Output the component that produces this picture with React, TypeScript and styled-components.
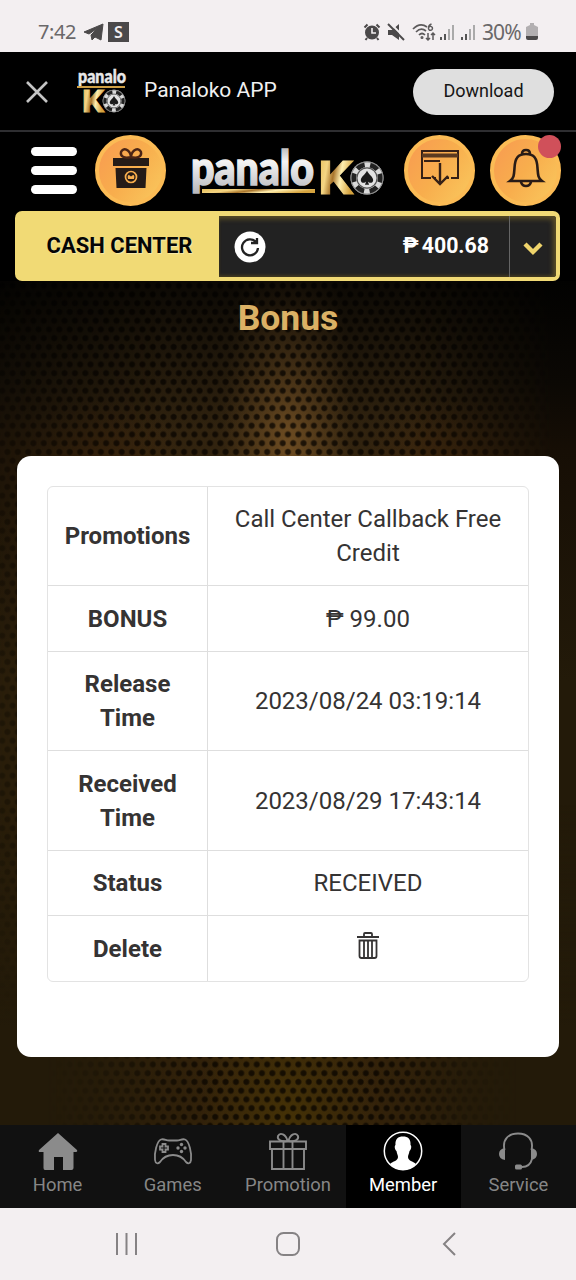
import React from 'react';
import styled, { createGlobalStyle } from 'styled-components';

const Global = createGlobalStyle`
  * { box-sizing: border-box; }
  body { margin: 0; background: #000; font-family: Roboto, "Liberation Sans", sans-serif; }
  svg { display: block; flex: none; overflow: visible; }
`;

const Screen = styled.div`
  width: 576px; height: 1280px; display: flex; flex-direction: column; overflow: hidden; background: #000;
`;

const StatusBar = styled.div`
  height: 52px; flex: none; background: #f3eff1; color: #5c5a5b;
  display: flex; align-items: center; padding: 12px 38px 0 38px;
`;
const Clock = styled.span`
  font: 400 20px/24px "Noto Sans", sans-serif; width: 40px; margin-right: 6px;
  letter-spacing: -0.4px; color: #6a6869; white-space: nowrap;
`;
const SBadge = styled.span`
  width: 21px; height: 20px; margin-left: 5px; background: #4b494a; color: #f3eff1;
  font: 600 16px/20px "Noto Sans", sans-serif; text-align: center;
`;
const StatusRight = styled.div`margin-left: auto; display: flex; align-items: center;`;
const Battery = styled.span`
  font: 400 21px/24px "Noto Sans", sans-serif; letter-spacing: -0.9px; width: 41px; margin: 0 3px 0 1px;
  color: #6a6869; white-space: nowrap;
`;

const AppBar = styled.div`
  height: 80px; flex: none; border-bottom: 2px solid #2e2e31; display: flex; align-items: center;
  padding: 1px 22px 0 25px; color: #f1f1f1;
`;
const AppLogo = styled.div`margin-left: 27px;`;
const AppName = styled.span`
  font-size: 21px; line-height: 24px; margin: -3px 0 0 15px;
`;
const Download = styled.button`
  margin-left: auto; width: 141px; height: 46px; border: 0; border-radius: 23px; background: #dfdfdf;
  color: #161616; font: 400 18px/44px Roboto, sans-serif; padding: 0 0 2px;
`;

const Header = styled.header`
  height: 79px; flex: none; display: flex; padding: 3px 15px 0 31px;
`;
const Burger = styled.div`
  width: 46px; height: 47px; margin-top: 12px; display: flex; flex-direction: column; justify-content: space-between;
`;
const Bar = styled.span`height: 9px; border-radius: 5px; background: #fff;`;
const Round = styled.div<{ $gap: number }>`
  position: relative; width: 71px; height: 71px; margin-left: ${p => p.$gap}px; padding-bottom: 6px; border-radius: 50%;
  background: linear-gradient(125deg, #f89f50 12%, #f8ae4d 50%, #f9c25a 88%);
  border: 4px solid #fbbb55; display: flex; align-items: center; justify-content: center; flex: none;
`;
const Alert = styled.i`
  position: absolute; top: -4px; right: -4px; width: 23px; height: 23px; border-radius: 50%; background: #d0505a;
`;
const LogoBox = styled.div`margin: 8px 0 0 24px; width: 196px;`;

const Cash = styled.div`
  height: 70px; flex: none; margin: 0 16px 0 15px; border-radius: 7px; background: #f1da75; display: flex; padding: 5px 4px 4px 0;
`;
const CashLabel = styled.div`
  width: 204px; padding-left: 5px; text-align: center; font-weight: 700; font-size: 22px; line-height: 60px; color: #050505;
  text-shadow: 1px 1px 1px #fff6; white-space: nowrap;
`;
const CashPanel = styled.div`
  flex: 1; display: flex; align-items: center; background: #222; color: #fff; padding-left: 15px;
  border-radius: 0 3px 3px 0; box-shadow: inset -3px 3px 5px #5c4f27, inset 0 -2px 3px #40391f;
`;
const Amount = styled.span`
  margin: 0 20px 2px auto; font-weight: 700; font-size: 21.3px; display: flex; gap: 3px;
`;
const More = styled.div`
  width: 47px; height: 61px; border-left: 1px solid #656565; display: flex; align-items: center; justify-content: center; padding-top: 3px;
`;

const Page = styled.main`
  position: relative; flex: 1; padding: 18px 17px 0; display: flex; flex-direction: column; align-items: center;
  background:
    linear-gradient(#000b 0, #0006 60px, transparent 150px),
    radial-gradient(circle, #080400c0 0 2.3px, transparent 3.7px) 2.2px 4.7px / 10.4px 17.5px,
    radial-gradient(circle, #080400c0 0 2.3px, transparent 3.7px) 7.4px 13.45px / 10.4px 17.5px,
    radial-gradient(ellipse 65px 260px at 50% 170px, #6d4c22, #6d4c2200),
    radial-gradient(ellipse 90px 160px at 50% 840px, #443106, #44310600),
    radial-gradient(ellipse 90px 70px at 17% 185px, #4a2a0c88, #4a2a0c00),
    radial-gradient(ellipse 90px 70px at 78% 185px, #4a2a0c88, #4a2a0c00),
    linear-gradient(#2b200f, #3a270e 400px, #33220a);
  &::before, &::after { content: ""; position: absolute; left: 0; right: 0; bottom: 0; }
  &::before {
    top: 0;
    background: linear-gradient(#020201, #0b0804 100px, #160e05 170px, #231a09 400px);
    mask-image: linear-gradient(90deg, #000b 0, transparent 27%, transparent 72%, #000 96%);
  }
  &::after {
    height: 320px; background: linear-gradient(#231a0900, #231a09 220px);
    mask-image: linear-gradient(90deg, #000 8%, transparent 38%, transparent 65%, #000 90%);
  }
`;
const Title = styled.h1`
  position: relative; z-index: 1; margin: 0; font-size: 35.5px; line-height: 38px; font-weight: 700; color: #dbb165;
`;
const Card = styled.section`
  position: relative; z-index: 1; width: 542px; height: 601px; margin-top: 119px; border-radius: 14px; background: #fff;
  padding: 30px;
`;
const Table = styled.div`border: 1px solid #e3e3e3; border-radius: 6px; height: 496px; width: 482px; overflow: hidden;`;
const Row = styled.div<{ $h: number }>`
  display: grid; grid-template-columns: 160px 1fr; height: ${p => p.$h}px;
  & + & { border-top: 1px solid #dedede; }
`;
const Cell = styled.div<{ $head?: boolean }>`
  display: flex; align-items: center; justify-content: center; text-align: center; padding: 0 10px;
  font-size: 24px; line-height: 34px; color: #353333; font-weight: ${p => (p.$head ? 700 : 400)};
  border-right: ${p => (p.$head ? '1px solid #dedede' : '0')};
`;
const Trash = styled.svg`margin-bottom: 7px;`;

const Tabs = styled.nav`height: 83px; flex: none; display: grid; grid-template-columns: repeat(5, 1fr); background: #111;`;
const Tab = styled.div<{ $on?: boolean }>`
  display: flex; flex-direction: column; align-items: center; padding-top: 5px; font-size: 18.4px; line-height: 24px;
  color: ${p => (p.$on ? '#fff' : '#868686')}; background: ${p => (p.$on ? '#000' : '#111')};
  svg { margin-bottom: 2px; }
`;
const SystemNav = styled.div`
  height: 72px; flex: none; background: #f3eff1; display: flex; align-items: center; padding: 0 118px 0 114px; justify-content: space-between;
`;
const HomeKey = styled.svg`margin-right: 5px;`;

const Chip = ({ x, y, r }: { x: number; y: number; r: number }) => (
  <g transform={`translate(${x} ${y}) scale(${r / 16})`}>
    <circle r="16" fill="#d9d9d9" />
    <circle r="13.2" fill="none" stroke="#222" strokeWidth="5.2" strokeDasharray="8.4 5.42" transform="rotate(-18)" />
    <circle r="15.5" fill="none" stroke="#8d8d8d" strokeWidth="1" />
    <circle r="9.8" fill="#e2e2e2" stroke="#555" strokeWidth="1.2" />
    <path d="M0-7C2-3 6-1 6 2.2C6 5 2.4 5.5.8 3.4L2 6.5H-2L-.8 3.4C-2.4 5.5-6 5-6 2.2C-6-1-2-3 0-7Z" fill="#1b1b1b" />
  </g>
);

const Gradients = () => (
  <defs>
    <linearGradient id="silver" x1="0" y1="0" x2="0" y2="1">
      <stop offset="0" stopColor="#999" /><stop offset=".4" stopColor="#f4f4f4" /><stop offset=".7" stopColor="#d4d4d6" /><stop offset="1" stopColor="#b5b5b9" />
    </linearGradient>
    <linearGradient id="gold" x1="0" y1="0" x2="1" y2=".25">
      <stop offset="0" stopColor="#e6bd58" /><stop offset=".3" stopColor="#f4d583" /><stop offset=".5" stopColor="#a8742b" />
      <stop offset=".7" stopColor="#ffefb0" /><stop offset="1" stopColor="#d5a33f" />
    </linearGradient>
  </defs>
);

const WideLogo = () => (
  <svg width="196" height="56" viewBox="0 0 196 56">
    <Gradients />
    <text x="1" y="42" textLength="123" lengthAdjust="spacingAndGlyphs" fontFamily="Lato" fontWeight="900" fontSize="47" fill="url(#silver)" stroke="url(#silver)" strokeWidth="1.6">panalo</text>
    <path d="M12 46H125V50H12Z" fill="url(#gold)" />
    <text x="128" y="51" textLength="35" lengthAdjust="spacingAndGlyphs" fontFamily="Roboto" fontWeight="700" fontSize="47" fill="url(#gold)" stroke="url(#gold)">K</text>
    <Chip x={177} y={35} r={16.5} />
  </svg>
);

const SmallLogo = () => (
  <svg width="53" height="48" viewBox="0 0 53 48">
    <text x="2" y="15" textLength="48" lengthAdjust="spacingAndGlyphs" fontFamily="Lato" fontWeight="900" fontSize="19" fill="#e8e8e8" stroke="#e8e8e8" strokeWidth=".5">panalo</text>
    <path d="M1 18H49V20H1Z" fill="#d0a045" />
    <text x="6" y="44" textLength="22" lengthAdjust="spacingAndGlyphs" fontFamily="Roboto" fontWeight="700" fontSize="31" fill="url(#gold)" stroke="url(#gold)">K</text>
    <Chip x={38} y={33} r={11.3} />
  </svg>
);

const Signal = () => (
  <svg width="21" height="18" viewBox="0 0 21 18" fill="none" strokeWidth="2">
    <path d="M2 14V17M6 11V17" stroke="#555" /><path d="M10 6V17M14 2V17" stroke="#aaa" />
  </svg>
);

const TrashIcon = () => (
  <Trash width="24" height="28" viewBox="0 0 24 28" fill="none" stroke="#353333" strokeWidth="1.8">
    <path d="M1 6H23M8 6V3Q8 2 9 2H15Q16 2 16 3V6M3.5 9.5H20.5V25Q20.5 27 18.5 27H5.5Q3.5 27 3.5 25ZM8 10V26M12 10V26M16 10V26" />
  </Trash>
);

const rows: { label: React.ReactNode; value: React.ReactNode; h: number }[] = [
  { label: 'Promotions', value: 'Call Center Callback Free Credit', h: 98 },
  { label: 'BONUS', value: '₱ 99.00', h: 66 },
  { label: <span>Release<br />Time</span>, value: '2023/08/24 03:19:14', h: 99 },
  { label: <span>Received<br />Time</span>, value: '2023/08/29 17:43:14', h: 100 },
  { label: 'Status', value: 'RECEIVED', h: 65 },
  { label: 'Delete', value: <TrashIcon />, h: 66 },
];

export default function App() {
  return (
    <Screen>
      <Global />
      <StatusBar>
        <Clock>7:42</Clock>
        <svg width="19" height="18" viewBox="0 0 19 18"><path d="M0 9L19 1L17 17L11 14L8 17L7 12L14 5L5 11Z" fill="#4b494a" stroke="#4b494a" /></svg>
        <SBadge>S</SBadge>
        <StatusRight>
          <svg width="18" height="18" viewBox="0 0 18 18" fill="none" stroke="#4b494a" strokeWidth="2">
            <circle cx="9" cy="9.5" r="6" fill="#4b494a" /><path d="M1.5 4.5L4.500 1.500M16.500 4.500L13.500 1.500M4 15L2.500 17M14 15L15.500 17" />
            <path d="M9 5V10H13" stroke="#f3eff1" strokeWidth="1.6" />
          </svg>
          <svg width="24" height="18" viewBox="-6 0 24 18">
            <path d="M1 7H5L12 1V17L5 12H1Z" fill="#4b494a" /><path d="M3 0L18 15" stroke="#f3eff1" strokeWidth="2" /><path d="M1 1L17 17" stroke="#4b494a" strokeWidth="2" />
          </svg>
          <svg width="34" height="20" viewBox="-7 0 34 20" fill="none" stroke="#5c5a5b" strokeWidth="1.7">
            <path d="M1 7Q8 0 15 5M4 10Q9 5 14 9M7 13Q10 10 13 13" /><circle cx="10" cy="15.500" r=".7" />
            <path d="M19.500 2Q16.500 3 16.500 6A2 2 0 1 0 17 5" strokeWidth="1.5" /><path d="M16 11V18M14 16L16 18L18 16M21 18V11M19 13L21 11L23 13" strokeWidth="1.5" />
          </svg>
          <Signal /><Signal />
          <Battery>30%</Battery>
          <svg width="12" height="18" viewBox="0 0 12 18"><path d="M4 0H8V2L12 4V13H0V4L4 2Z" fill="#b2afb1" /><path d="M0 13H12V15Q12 17 10 17H2Q0 17 0 15Z" fill="#4b494a" /></svg>
        </StatusRight>
      </StatusBar>

      <AppBar>
        <svg width="24" height="24" viewBox="0 0 24 24" stroke="#c4c4c4" strokeWidth="2.6"><path d="M2 2L22 22M22 2L2 22" /></svg>
        <AppLogo><SmallLogo /></AppLogo>
        <AppName>Panaloko APP</AppName>
        <Download>Download</Download>
      </AppBar>

      <Header>
        <Burger><Bar /><Bar /><Bar /></Burger>
        <Round $gap={18}>
          <svg width="38" height="42" viewBox="0 0 38 42">
            <path d="M1 11H37V19H1ZM3.5 21H34.5L33.5 41H4.5Z" fill="#251b17" />
            <path d="M19 10C12 12 8 9 9 5C11 0 18 2 19 10C20 2 27 0 29 5C30 9 26 12 19 10Z" fill="none" stroke="#4b2415" strokeWidth="2.4" />
            <circle cx="19" cy="30" r="5.5" fill="none" stroke="#f8ae4d" strokeWidth="1.7" /><path d="M16 32Q15 28 17 28L19 29.500L21 28Q23 28 22 32Z" fill="#f8ae4d" />
          </svg>
        </Round>
        <LogoBox><WideLogo /></LogoBox>
        <Round $gap={18}>
          <svg width="40" height="37" viewBox="0 0 40 37" fill="none" stroke="#352016" strokeWidth="2">
            <path d="M11 29H2V2H38V29H31M26 29H29M14 29H16M4 12H20" /><path d="M2 6.500H38" strokeWidth="4" stroke="#5b3a20" />
            <path d="M20 14V35M12 27L20 35L28 27" strokeWidth="2.4" />
          </svg>
        </Round>
        <Round $gap={15}>
          <svg width="36" height="40" viewBox="0 0 36 40" fill="none" stroke="#291b16" strokeWidth="2.6">
            <path d="M2 33C6 30 6 27 6.500 20C7 10 10 6 18 6C26 6 29 10 29.500 20C30 27 30 30 34 33ZM14 6Q14 2 18 2Q22 2 22 6M13 34Q14 38 18 38Q22 38 23 34" />
          </svg>
          <Alert />
        </Round>
      </Header>

      <Cash>
        <CashLabel>CASH CENTER</CashLabel>
        <CashPanel>
          <svg width="32" height="32" viewBox="0 0 32 32">
            <circle cx="16" cy="16" r="15.5" fill="#fff" />
            <path d="M22 11A8 8 0 1 0 24 17M23 7V12H17" fill="none" stroke="#222" strokeWidth="2.3" />
          </svg>
          <Amount><span>₱</span><span>400.68</span></Amount>
          <More><svg width="20" height="15" viewBox="0 0 20 15"><path d="M2 3L10 11L18 3" fill="none" stroke="#efd46b" strokeWidth="4.4" /></svg></More>
        </CashPanel>
      </Cash>

      <Page>
        <Title>Bonus</Title>
        <Card>
          <Table>
            {rows.map((r, i) => (
              <Row key={i} $h={r.h}>
                <Cell $head>{r.label}</Cell>
                <Cell>{r.value}</Cell>
              </Row>
            ))}
          </Table>
        </Card>
      </Page>

      <Tabs>
        <Tab>
          <svg width="42" height="41" viewBox="0 0 42 41"><path d="M21 3L40 20Q41 22 38 22H36.5V38Q36.5 40 34.5 40H26V27H17V40H8Q6.5 40 6.5 38V22H3Q1 22 2 20Z" fill="#8b8b8b" /></svg>
          Home
        </Tab>
        <Tab>
          <svg width="42" height="41" viewBox="0 0 42 41" fill="none" stroke="#8b8b8b" strokeWidth="1.8">
            <path d="M9 9.5C12 8.500 14 10.500 17 10.500H25C28 10.500 30 8.500 33 9.500C37 11 40 23 39 30C38.500 34 36 34 34 32C30 26 26 25 21 25C16 25 12 26 8 32C6 34 3.500 34 3 30C2 23 5 11 9 9.500Z" />
            <path d="M10.5 14H13.5V16.5H16V19.5H13.5V22H10.5V19.5H8V16.5H10.5Z" />
            <g fill="#8b8b8b" stroke="none"><circle cx="29.5" cy="14.5" r="1.7" /><circle cx="29.5" cy="21.5" r="1.7" /><circle cx="26" cy="18" r="1.7" /><circle cx="33" cy="18" r="1.7" /></g>
          </svg>
          Games
        </Tab>
        <Tab>
          <svg width="42" height="41" viewBox="0 0 42 41" fill="none" stroke="#8b8b8b" strokeWidth="1.9">
            <path d="M3 11.5H39V19H3ZM5 19V39H37V19M16.5 11.5V39M25.5 11.5V39" />
            <path d="M20 11C13 12 10 9 11 6C13 2 19 4 20.5 11H21.5C23 4 29 2 31 6C32 9 29 12 22 11" />
          </svg>
          Promotion
        </Tab>
        <Tab $on>
          <svg width="42" height="41" viewBox="0 0 42 41">
            <circle cx="21" cy="21" r="18.7" fill="#000" stroke="#fff" strokeWidth="1.5" />
            <path d="M21 6.5C26 6.500 29 9 28.500 15C30 16 29 20 27.500 21C27 24 26 25 26 27C26 31 31 31 34 34Q28.500 40 21 40Q13.500 40 8 34C11 31 16 31 16 27C16 25 15 24 14.500 21C13 20 12 16 13.500 15C13 9 16 6.500 21 6.500Z" fill="#fff" />
          </svg>
          Member
        </Tab>
        <Tab>
          <svg width="42" height="41" viewBox="0 0 42 41" fill="none" stroke="#8b8b8b" strokeWidth="1.9">
            <path d="M7.5 20C5 9 12 3.500 21 3.500S37 9 34.500 20M35 29Q33 37 25 37" />
            <path d="M8 18Q2 19 2 24Q2 29 8 30ZM34 18Q40 19 40 24Q40 29 34 30Z" fill="#8b8b8b" stroke="none" />
            <rect x="18" y="34.5" width="7" height="5" rx="1.5" fill="#8b8b8b" stroke="none" />
          </svg>
          Service
        </Tab>
      </Tabs>

      <SystemNav>
        <svg width="26" height="26" viewBox="0 0 26 26" stroke="#858284" strokeWidth="2"><path d="M3 2V24M12.5 2V24M22 2V24" /></svg>
        <HomeKey width="26" height="26" viewBox="0 0 26 26" fill="none" stroke="#858284" strokeWidth="2"><rect x="2" y="2" width="22" height="22" rx="6.5" /></HomeKey>
        <svg width="18" height="26" viewBox="0 0 18 26" fill="none" stroke="#858284" strokeWidth="2"><path d="M15 2L4 13L15 24" /></svg>
      </SystemNav>
    </Screen>
  );
}
